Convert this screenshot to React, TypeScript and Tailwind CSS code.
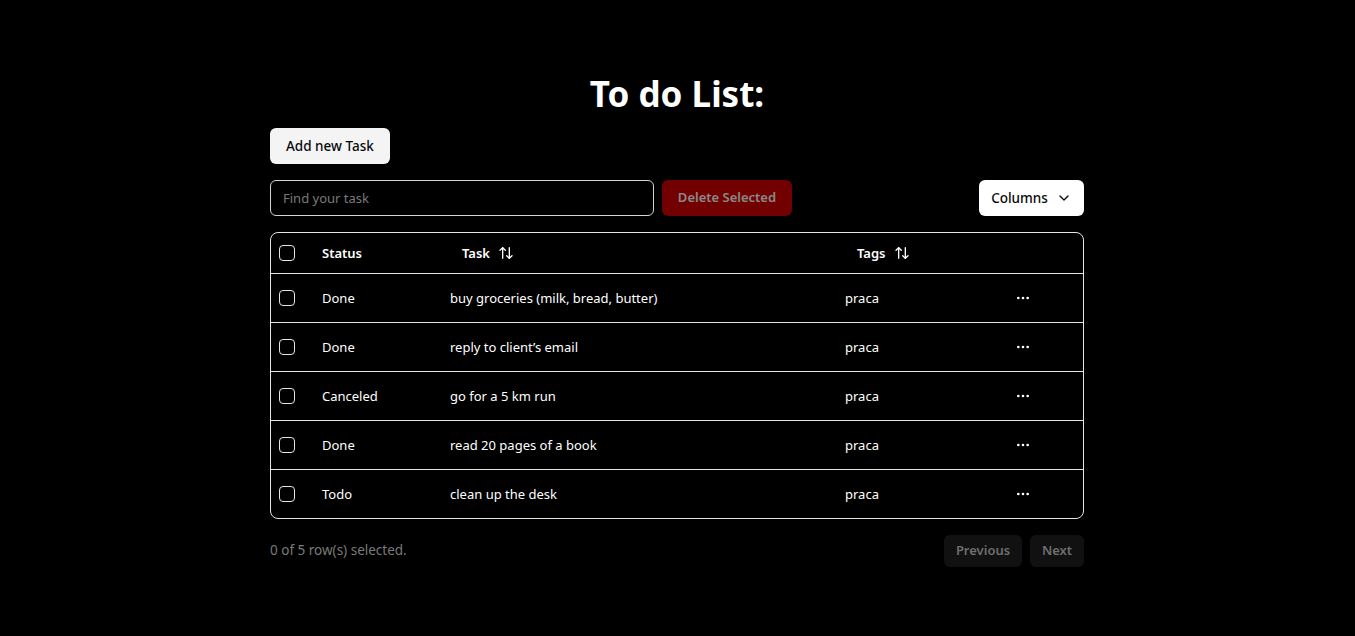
import { ArrowUpDown, ChevronDown, MoreHorizontal } from 'lucide-react';

type Task = { id: number; status: string; title: string; tag: string };

const tasks: Task[] = [
  { id: 1, status: 'Done', title: 'buy groceries (milk, bread, butter)', tag: 'praca' },
  { id: 2, status: 'Done', title: 'reply to client’s email', tag: 'praca' },
  { id: 3, status: 'Canceled', title: 'go for a 5 km run', tag: 'praca' },
  { id: 4, status: 'Done', title: 'read 20 pages of a book', tag: 'praca' },
  { id: 5, status: 'Todo', title: 'clean up the desk', tag: 'praca' },
];

function Box() {
  return <div className="h-4 w-4 rounded-[4px] border border-[#e5e5e5]" />;
}

export default function App() {
  return (
    <div
      className="min-h-screen bg-black text-white"
      style={{ fontFamily: '"Segoe UI", "Noto Sans", "Open Sans", sans-serif' }}>
      <div className="ml-[270px] w-[814px] pt-[72px]">
        <h1 className="text-center text-[35px] font-bold leading-[44px]">To do List:</h1>
        <button className="mt-3 h-9 rounded-md bg-[#f4f4f5] px-4 text-[13.5px] font-medium text-[#09090b]">
          Add new Task
        </button>

        <div className="mt-4 flex items-center gap-2">
          <input
            placeholder="Find your task"
            className="h-9 w-[384px] rounded-md border border-[#d4d4d4] bg-black px-3 text-[13px] text-white placeholder:text-[#7a7a7a] outline-none"
          />
          <button className="h-9 w-[130px] rounded-md bg-[#720000] text-[13px] font-semibold text-[#8a8a8a]">
            Delete Selected
          </button>
          <button className="ml-auto flex h-9 w-[105px] items-center justify-center gap-2 rounded-md bg-white text-[13.5px] font-medium text-[#09090b]">
            Columns <ChevronDown className="h-4 w-4" />
          </button>
        </div>

        <div className="mt-4 overflow-hidden rounded-lg border border-[#e5e5e5]">
          <table className="w-full table-fixed text-[13px]">
            <colgroup>
              <col className="w-[43px]" />
              <col className="w-[128px]" />
              <col className="w-[395px]" />
              <col className="w-[162px]" />
              <col />
            </colgroup>
            <thead>
              <tr className="h-10 border-b border-[#e5e5e5]">
                <th className="px-2 text-left align-middle">
                  <Box />
                </th>
                <th className="px-2 pt-px text-left font-semibold">Status</th>
                <th className="px-2 pt-px text-left font-semibold">
                  <span className="inline-flex items-center px-3">
                    Task <ArrowUpDown className="ml-2 h-4 w-4" />
                  </span>
                </th>
                <th className="px-2 pt-px text-left font-semibold">
                  <span className="inline-flex items-center px-3">
                    Tags <ArrowUpDown className="ml-2 h-4 w-4" />
                  </span>
                </th>
                <th />
              </tr>
            </thead>
            <tbody>
              {tasks.map((t, i) => (
                <tr key={t.id} className={i < tasks.length - 1 ? 'border-b border-[#e5e5e5]' : ''}>
                  <td className="p-2 align-middle">
                    <Box />
                  </td>
                  <td className="px-2 pt-[9px] pb-[7px]">{t.status}</td>
                  <td className="px-2 pt-[9px] pb-[7px]">{t.title}</td>
                  <td className="px-2 pt-[9px] pb-[7px]">{t.tag}</td>
                  <td className="p-2">
                    <button className="flex h-8 w-8 items-center justify-center">
                      <MoreHorizontal className="h-4 w-4" />
                    </button>
                  </td>
                </tr>
              ))}
            </tbody>
          </table>
        </div>

        <div className="flex items-center justify-end gap-2 py-4">
          <div className="flex-1 text-[13.5px] text-[#7a7a7a]">0 of 5 row(s) selected.</div>
          <button className="h-8 w-[78px] rounded-md bg-[#111111] text-[13px] font-semibold text-[#6e6e6e]">
            Previous
          </button>
          <button className="h-8 w-[54px] rounded-md bg-[#111111] text-[13px] font-semibold text-[#6e6e6e]">
            Next
          </button>
        </div>
      </div>
    </div>
  );
}
